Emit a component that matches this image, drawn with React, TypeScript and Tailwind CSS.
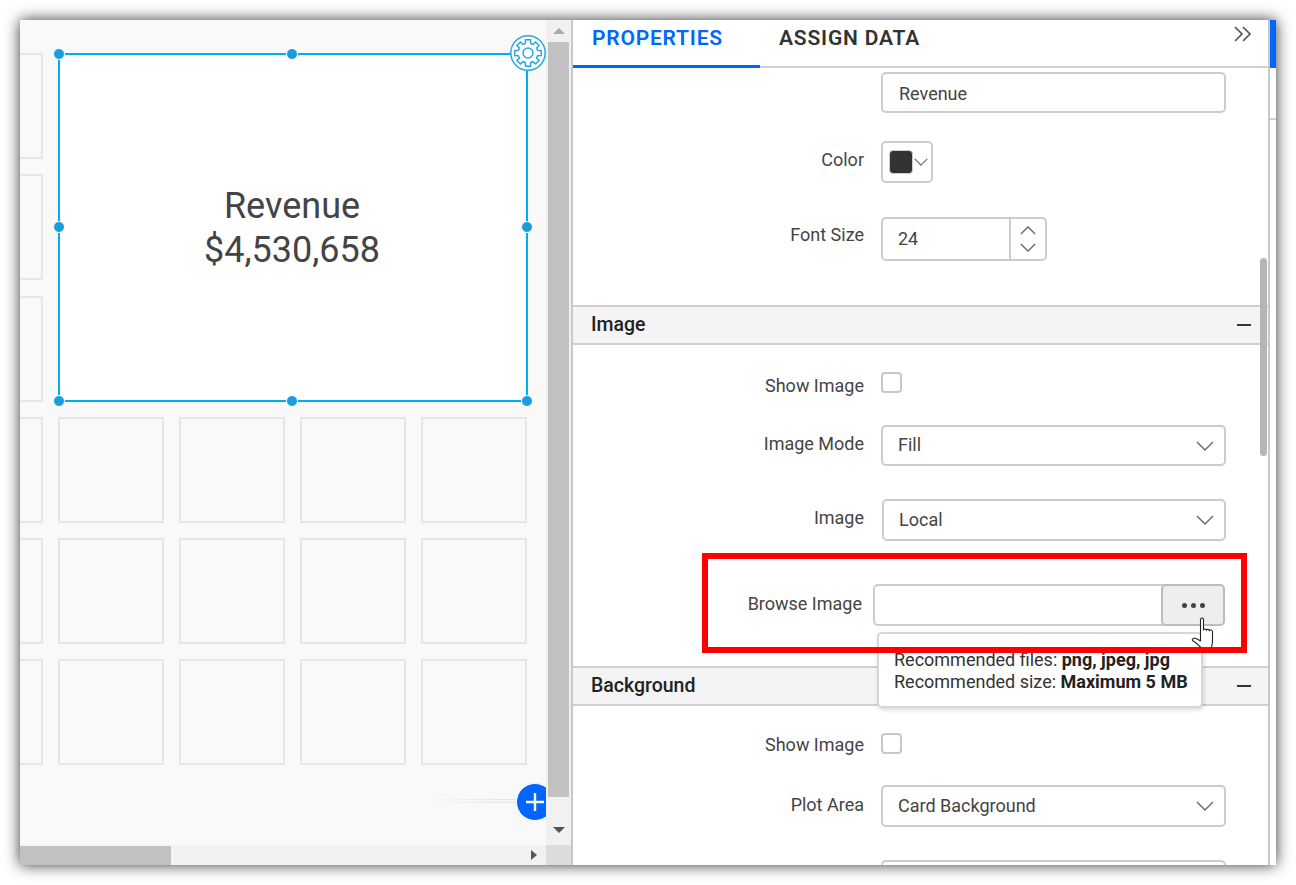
import { ReactNode } from "react";

const gearPath = () => {
  const teeth = 8;
  const pts: string[] = [];
  for (let i = 0; i < teeth; i++) {
    const a = (i * Math.PI * 2) / teeth - Math.PI / 2;
    const step = (Math.PI * 2) / teeth;
    [
      [9.8, -0.5],
      [10, -0.34],
      [13.4, -0.24],
      [13.4, 0.24],
      [10, 0.34],
      [9.8, 0.5],
    ].forEach(([r, f]) => {
      const t = a + f * step;
      pts.push(`${(18 + r * Math.cos(t)).toFixed(2)} ${(18 + r * Math.sin(t)).toFixed(2)}`);
    });
  }
  return "M" + pts.join("L") + "Z";
};

function Tile() {
  return <div className="border-2 border-[#e6e6e6] bg-[#f9f9f9]" />;
}

function Handle({ className }: { className: string }) {
  return <span className={`absolute w-[10px] h-[10px] rounded-full bg-[#1b9cdc] border border-white box-content ${className}`} />;
}

function Chevron({ className = "" }: { className?: string }) {
  return (
    <svg viewBox="0 0 18 10" className={`w-[18px] h-[10px] ${className}`} fill="none" stroke="#666" strokeWidth="1.4">
      <path d="M1 1l8 8 8-8" />
    </svg>
  );
}

function Row({
  label,
  children,
  className = "",
  labelClass = "",
}: {
  label: string;
  children: ReactNode;
  className?: string;
  labelClass?: string;
}) {
  return (
    <div className={`flex items-center ${className}`}>
      <div className={`w-[291px] text-right text-[18px] text-[#444] shrink-0 ${labelClass}`}>{label}</div>
      {children}
    </div>
  );
}

function Select({ value, className = "" }: { value: string; className?: string }) {
  return (
    <div className={`ml-[17px] w-[345px] h-full border-2 border-[#cccccc] rounded-[5px] flex items-center justify-between pl-[15px] pr-[10px] text-[18px] text-[#444] ${className}`}>
      <span className="-mt-[2px]">{value}</span>
      <Chevron />
    </div>
  );
}

function Section({ title, className = "" }: { title: string; className?: string }) {
  return (
    <div className={`h-[40px] bg-[#f4f4f4] border-y-2 border-[#d0d0d0] flex items-center justify-between pl-[18px] pr-[17px] ${className}`}>
      <span className="text-[19.5px] font-medium text-[#222]">{title}</span>
      <span className="w-[14px] h-[2px] bg-[#333]" />
    </div>
  );
}

function Checkbox() {
  return <div className="ml-[17px] w-[21px] h-[21px] border-2 border-[#c8c8c8] rounded-[4px] bg-white" />;
}

export default function App() {
  return (
    <div className="w-[1296px] h-[885px] bg-white p-[20px] overflow-hidden font-['Roboto',sans-serif]">
      <div className="relative flex h-full bg-white shadow-[0_0_14px_rgba(0,0,0,0.8)]">
        {/* designer side */}
        <div className="w-[553px] shrink-0 flex flex-col border-r-2 border-[#c8c8c8]">
          <div className="flex h-[825px]">
            <div className="relative flex-1 overflow-hidden bg-[#f9f9f9]">
              <div className="ml-[-83px] mt-[33px] grid grid-cols-[repeat(5,106px)] auto-rows-[106px] gap-x-[15px] gap-y-[15.3px]">
                {Array.from({ length: 30 }).map((_, i) => (
                  <Tile key={i} />
                ))}
              </div>

              {/* selected widget */}
              <div className="absolute left-[38px] top-[33px] w-[470px] h-[349px] bg-white border-2 border-[#00aeef] pr-[2px] flex flex-col items-center justify-center text-[36px] leading-[44px] text-[#444]">
                <div>Revenue</div>
                <div>$4,530,658</div>
              </div>
              <Handle className="left-[33px] top-[28px]" />
              <Handle className="left-[266px] top-[28px]" />
              <Handle className="left-[33px] top-[201px]" />
              <Handle className="left-[501px] top-[201px]" />
              <Handle className="left-[33px] top-[375px]" />
              <Handle className="left-[266px] top-[375px]" />
              <Handle className="left-[501px] top-[375px]" />
              <svg viewBox="0 0 36 36" className="absolute left-[490px] top-[15px] w-[36px] h-[36px]" fill="none" stroke="#29a8e0" strokeWidth="1.5">
                <circle cx="18" cy="18" r="17.2" fill="#fff" />
                <path d={gearPath()} />
                <circle cx="18" cy="18" r="5" />
              </svg>

              {/* add widget */}
              <div className="absolute left-[410px] top-[779px] w-[88px] h-[4px] border-y border-[#e0e0e0] bg-[#f4f4f4] [mask-image:linear-gradient(to_right,transparent,black)]" />
              <div className="absolute left-[496px] top-[763px] w-[38px] h-[38px] rounded-full bg-[#0066ff] border border-white flex items-center justify-center">
                <svg viewBox="0 0 20 20" className="w-[20px] h-[20px]" stroke="#fff" strokeWidth="2.4">
                  <path d="M10 1v18M1 10h18" />
                </svg>
              </div>
            </div>

            {/* vertical scrollbar */}
            <div className="w-[25px] shrink-0 bg-[#f1f1f1] flex flex-col items-center">
              <div className="h-[22px] flex items-center justify-center">
                <div className="w-0 h-0 border-x-[6px] border-x-transparent border-b-[6px] border-b-[#aaaaaa]" />
              </div>
              <div className="w-[21px] h-[755px] bg-[#c1c1c1]" />
              <div className="pt-[30px]">
                <div className="w-0 h-0 border-x-[6px] border-x-transparent border-t-[6px] border-t-[#555]" />
              </div>
            </div>
          </div>
          <div className="flex h-[20px]">
            <div className="flex-1 bg-[#f1f1f1] flex items-center justify-between pr-[9px]">
              <div className="w-[151px] h-[19px] mt-[1px] bg-[#c1c1c1]" />
              <div className="w-0 h-0 border-y-[5.5px] border-y-transparent border-l-[6px] border-l-[#555]" />
            </div>
            <div className="w-[25px] bg-[#dcdcdc]" />
          </div>
        </div>

        {/* properties panel */}
        <div className="w-[695px] shrink-0 relative overflow-hidden">
          <div className="h-[48px] border-b-2 border-[#d0d0d0] flex relative">
            <div className="w-[187px] h-[48px] border-b-[3px] border-[#0066ff] pl-[19px] pt-[3px] text-[21px] font-semibold tracking-[0.8px] text-[#0066ff]">
              PROPERTIES
            </div>
            <div className="pl-[19px] pt-[3px] text-[21px] font-semibold tracking-[0.8px] text-[#333]">ASSIGN DATA</div>
            <svg viewBox="0 0 20 16" className="absolute left-[660px] top-[6px] w-[20px] h-[16px]" fill="none" stroke="#555" strokeWidth="1.7">
              <path d="M2 1l7 7-7 7M10 1l7 7-7 7" />
            </svg>
          </div>

          <div className="ml-[308px] mt-[4px] w-[345px] h-[41px] border-2 border-[#cccccc] rounded-[5px] flex items-center pl-[16px] pt-[1px] text-[18px] text-[#444]">
            Revenue
          </div>

          <Row label="Color" className="mt-[28px] h-[42px]" labelClass="-mt-[5px]">
            <div className="ml-[17px] w-[52px] h-full border-2 border-[#cccccc] rounded-[5px] flex items-center pl-[6px] gap-[1px]">
              <div className="w-[24px] h-[24px] shrink-0 rounded-[4px] bg-[#333] border border-[#ccc]" />
              <Chevron className="!w-[14px] !h-[8px]" />
            </div>
          </Row>

          <Row label="Font Size" className="mt-[34px] h-[44px]" labelClass="-mt-[10px]">
            <div className="ml-[17px] w-[166px] h-full border-2 border-[#cccccc] rounded-[5px] flex items-center justify-between text-[18px] text-[#444] pl-[15px]">
              <span className="-mt-[2px]">24</span>
              <div className="w-[36px] h-full border-l-2 border-[#cccccc] flex flex-col items-center justify-center gap-[8px]">
                <Chevron className="!w-[16px] !h-[9px] rotate-180" />
                <Chevron className="!w-[16px] !h-[9px]" />
              </div>
            </div>
          </Row>

          <Section title="Image" className="mt-[44px]" />

          <Row label="Show Image" className="mt-[27px] h-[21px]" labelClass="mt-[5px]">
            <Checkbox />
          </Row>
          <Row label="Image Mode" className="mt-[32px] h-[41px]" labelClass="-mt-[4px]">
            <Select value="Fill" />
          </Row>
          <Row label="Image" className="mt-[33px] h-[42px]" labelClass="-mt-[6px]">
            <Select value="Local" className="!ml-[18px] !w-[344px]" />
          </Row>
          <Row label="Browse Image" className="mt-[43px] h-[42px]" labelClass="!w-[289px] -mt-[4px]">
            <div className="ml-[11px] w-[352px] h-full border-2 border-[#cccccc] rounded-[5px] flex justify-end">
              <div className="w-[64px] -my-[2px] -mr-[2px] border-2 border-[#bcbcbc] rounded-[5px] bg-[#eeeeee] flex items-center justify-center gap-[4px]">
                <span className="w-[5px] h-[5px] rounded-full bg-[#444]" />
                <span className="w-[5px] h-[5px] rounded-full bg-[#444]" />
                <span className="w-[5px] h-[5px] rounded-full bg-[#444]" />
              </div>
            </div>
          </Row>

          <Section title="Background" className="mt-[40px]" />

          <Row label="Show Image" className="mt-[27px] h-[21px]" labelClass="mt-[1px]">
            <Checkbox />
          </Row>
          <Row label="Plot Area" className="mt-[31px] h-[42px]" labelClass="-mt-[4px]">
            <Select value="Card Background" />
          </Row>
          <div className="ml-[308px] mt-[33px] w-[345px] h-[42px] border-2 border-[#cccccc] rounded-[5px]" />

          {/* panel scrollbar */}
          <div className="absolute left-[687px] top-[238px] w-[7px] h-[198px] rounded-[4px] bg-[#b5b5b5]" />

          {/* tooltip */}
          <div className="absolute left-[304px] top-[612px] w-[326px] h-[76px] bg-white border-2 border-[#d6d6d6] rounded-[5px] shadow-[1px_2px_4px_rgba(0,0,0,0.15)] pl-[15px] pt-[15px] text-[18px] leading-[22px] text-[#333]">
            <div>
              Recommended files: <b className="font-bold text-[#222]">png, jpeg, jpg</b>
            </div>
            <div>
              Recommended size: <b className="font-bold text-[#222]">Maximum 5 MB</b>
            </div>
          </div>

          {/* hand cursor */}
          <svg viewBox="0 0 26 34" className="absolute left-[618px] top-[597px] w-[26px] h-[34px]" fill="#fff" stroke="#222" strokeWidth="1.1" strokeLinejoin="round">
            <path d="M9.500 20V2.500a1.500 1.500 0 0 1 3 0V13c0-1.400 3-1.400 3 .3 0-1.400 3-1.200 3 .5 0-1.200 3-1 3 .8V24c0 3-.8 5-1.500 8H11C9 29 6 26.500 1.500 23.500c-.8-1 .4-2.600 2.200-2.200 2 .4 4 1.200 5.800 2.700z" />
          </svg>

          {/* callout */}
          <div className="absolute left-[129px] top-[533px] w-[545px] h-[100px] border-[6px] border-[#ff0000]" />
        </div>

        {/* far right strip */}
        <div className="flex-1 border-l-2 border-[#c8c8c8] flex flex-col">
          <div className="h-[48px] bg-[#0066ff]" />
          <div className="h-[52px] border-b-2 border-[#d0d0d0]" />
        </div>
      </div>
    </div>
  );
}
